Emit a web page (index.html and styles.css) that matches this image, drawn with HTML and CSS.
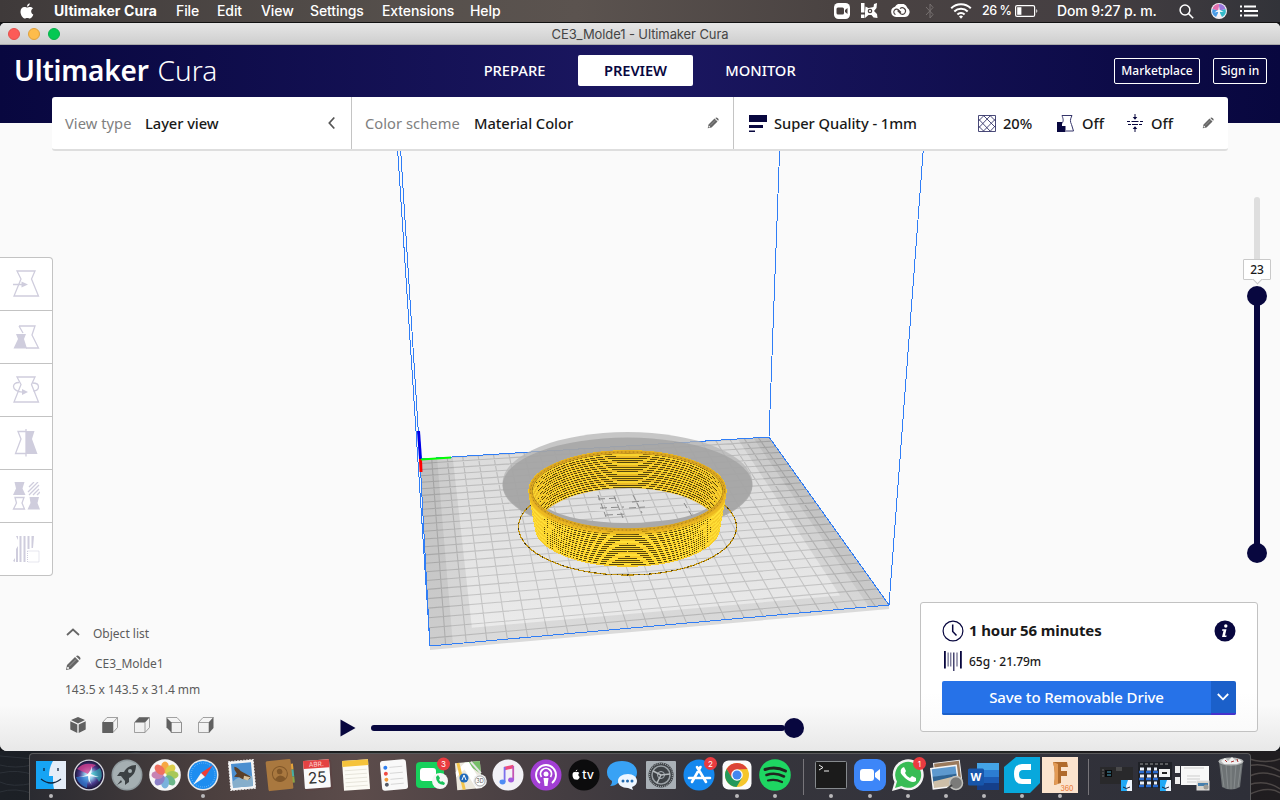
FILE: index.html
```html
<!DOCTYPE html>
<html lang="es">
<head>
<meta charset="utf-8">
<title>CE3_Molde1 - Ultimaker Cura</title>
<link rel="stylesheet" href="styles.css">
</head>
<body>
<nav class="menubar">
  <svg class="apple" width="14" height="16" viewBox="0 0 14 16" fill="#fff"><path d="M9.7 0.3C8.1.6 6.900 2 7 3.700 8.700 3.600 9.900 2 9.700.3zM7.200 4.600C6.600 4.600 5.600 3.900 4.500 3.900 2.300 4 .5 5.700.5 8.800c0 3 2.200 6.700 4.100 6.700.9 0 1.500-.6 2.700-.6s1.700.6 2.600.6c1.600 0 3-2.700 3.400-4-2.800-1.400-2.700-5-.3-6.100C12.200 4.300 11 3.900 10 3.900c-1.200 0-2.100.7-2.800.7z"/></svg>
  <b>Ultimaker Cura</b><span>File</span><span>Edit</span><span>View</span><span>Settings</span><span>Extensions</span><span>Help</span>
  <svg width="16" height="16" viewBox="0 0 16 16"><rect width="16" height="16" rx="4.500" fill="#fff"/><rect x="2.500" y="4.500" width="7.500" height="7" rx="1.500" fill="#4a4241"/><path d="M11 7l2.500-2v6L11 9z" fill="#4a4241"/></svg>
  <svg width="18" height="16" viewBox="0 0 18 16" fill="#fff"><path d="M1 0h3.500v9.500H1zM1 11.500h3.500v3.500H1zM5.500 3.500L8.500 5l5-1 .5-3 3-1-.5 5-2.500 3 3 3 .5 4-4-.5-2-2.500h-3L5 15V9z"/><circle cx="10" cy="8" r="2.300" fill="#4a4241"/><circle cx="10" cy="8" r="1.100" fill="#fff"/></svg>
  <svg width="20" height="14" viewBox="0 0 20 14"><path d="M6 13a5.200 5.200 0 0 1-1-10.200A7 7 0 0 1 17.500 4 5 5 0 0 1 14 13z" fill="#fff"/><path d="M11 8.500L9 6.500a2.800 2.800 0 1 0-3.500 4M7.500 6.500l3.500 3.600a3.300 3.300 0 1 0-1-5.500" fill="none" stroke="#4a4241" stroke-width="1.100"/></svg>
  <svg width="10" height="16" viewBox="0 0 10 16"><path d="M1 4l7 7.500L5 15V1l3 3.500L1 12" fill="none" stroke="#777170" stroke-width="1"/></svg>
  <svg width="22" height="16" viewBox="0 0 22 16" fill="none" stroke="#fff" stroke-width="2"><path d="M1.200 5.200a14 14 0 0 1 19.600 0M4.300 8.500a9.500 9.500 0 0 1 13.400 0M7.400 11.500a5 5 0 0 1 7.200 0"/><path d="M11 15.800l-2-2.300a3 3 0 0 1 4 0z" fill="#fff" stroke="none"/></svg>
  <span class="small">26 %</span>
  <svg width="24" height="12" viewBox="0 0 24 12"><rect x=".6" y=".6" width="19" height="10.800" rx="1.500" fill="none" stroke="#fff" stroke-width="1.200"/><rect x="2.200" y="2.200" width="4.200" height="7.600" fill="#fff"/><path d="M21.300 4q2 2 0 4z" fill="#fff"/></svg>
  <span class="clock">Dom 9:27 p. m.</span>
  <svg width="15" height="15" viewBox="0 0 15 15" fill="none" stroke="#fff" stroke-width="1.500"><circle cx="6" cy="6" r="4.900"/><path d="M9.600 9.600l4.600 4.600"/></svg>
  <svg width="16" height="16" viewBox="0 0 16 16"><circle cx="8" cy="8" r="8" fill="#f1eef4"/><path d="M8 8L1.500 6A7 7 0 0 1 8 1z" fill="#e26fae"/><path d="M8 8V1a7 7 0 0 1 6.500 5z" fill="#9a78de"/><path d="M8 8L1.500 6A7 7 0 0 0 5 14z" fill="#4a9be6"/><path d="M8 8l6.500-2a7 7 0 0 1-3.500 8z" fill="#34b9c8"/><path d="M8 3l.7 4 4 2-4-.2L8 15l-.7-6.200-4 .7 4-2.500z" fill="#fff"/></svg>
  <svg width="18" height="12" viewBox="0 0 18 12" stroke="#fff" stroke-width="2"><path d="M0 1.500h2M4 1.500h12M0 6h2M4 6h14M0 10.500h2M4 10.500h14"/></svg>
</nav>

<section class="window">
  <header class="titlebar">
    <div class="lights"><i></i><i></i><i></i></div>
    <div class="title">CE3_Molde1 - Ultimaker Cura</div>
  </header>
  <main class="workspace">
    <svg class="scene" id="scene" width="1280" height="706" viewBox="0 45 1280 706"></svg>
    <div class="appheader">
      <div class="logo"><b>Ultimaker</b><span>Cura</span></div>
      <div class="tabs"><span>PREPARE</span><span class="active">PREVIEW</span><span>MONITOR</span></div>
      <div class="account"><span class="market">Marketplace</span><span class="signin">Sign in</span></div>
    </div>
    <div class="stagebar">
      <div class="seg seg-view"><span class="label">View type</span><span class="value">Layer view</span>
        <svg width="9" height="14" viewBox="0 0 9 14" fill="none" stroke="#555" stroke-width="1.700"><path d="M7.300 1.500L2.300 7l5 5.500"/></svg></div>
      <div class="seg seg-color"><span class="label">Color scheme</span><span class="value">Material Color</span>
        <svg width="12" height="12" viewBox="0 0 16 16"><use href="#pencil"/></svg></div>
      <div class="seg seg-print">
        <svg width="18" height="17" viewBox="0 0 18 17" fill="#08073f"><path d="M0 0h18v7H0zM0 10h14v3H0zM0 15.500h6v1.500H0z"/></svg>
        <span class="value">Super Quality - 1mm</span>
        <svg width="18" height="17" viewBox="0 0 18 17" fill="none" stroke="#35356a" stroke-width=".9"><path d="M.5.500h17v16H.5zM.5 6L6 .5M.5 13L12.500.5M5 16.500L17.500 4M12 16.500l5.500-6M.5 11l5.500 5.500M.5 4l12 12.500M5.500.5l12 12M12 .5l5.500 5.500"/></svg>
        <span class="value">20%</span>
        <svg width="18" height="17" viewBox="0 0 18 17"><path d="M5 .5h10c-2 4-2 6-.5 9l2 6.500H9M5 .5c1 3 2 5 0 8" fill="none" stroke="#35356a"/><path d="M0 7h5v4h3.500v6H0z" fill="#08073f"/></svg>
        <span class="value">Off</span>
        <svg width="16" height="18" viewBox="0 0 16 18"><path d="M0 7.500h3M4.500 7.500h7M13 7.500h3M1 10.500h3M5 10.500h6M12 10.500h3M8 0v4M8 14v4" stroke="#08073f" fill="none"/><path d="M5.700 3h4.600L8 5.800zM5.700 15h4.600L8 12.200z" fill="#08073f"/></svg>
        <span class="value">Off</span>
        <svg width="12" height="12" viewBox="0 0 16 16"><use href="#pencil"/></svg>
      </div>
    </div>

    <div class="middle">
      <div class="tools">
        <div><svg viewBox="0 0 28 28"><path d="M5 1h18l-3.500 8L26.500 26H2L9 9z" class="ol"/><path d="M1 14.500h9" class="ol"/><path d="M9.500 11.500l6.500 3-6.500 3z" class="fl"/></svg></div>
        <div><svg viewBox="0 0 28 28"><path d="M7 3h16l-3 9 6.500 13H14M7 3l4 7" class="ol"/><path d="M4 11h10l-2 5 3 9.500H1.500L6 16z" class="fl"/></svg></div>
        <div><svg viewBox="0 0 28 28"><path d="M5 1h18l-3.500 7.500L26.500 26H2L9 8.500z" class="ol"/><path d="M7 6.500c-4 0-5.500 2-5.500 4 0 3 4 5.300 9 5.700M20.500 7c4 0 6 1.500 6 3.700s-2 4-5 4.300" class="ol"/><path d="M10 13l6 3-6 3z" class="fl"/></svg></div>
        <div><svg viewBox="0 0 28 28"><path d="M14 2.500H6l3 7.500L3.500 24.500H14" class="ol"/><path d="M14 2h8.500L20 10l5.500 15H14z" class="fl"/><path d="M14 0v27.500" class="ol"/></svg></div>
        <div><svg viewBox="0 0 28 28"><path d="M2.500 0h10l-2 6.500 3 6.500H1l3-6.500zM17.500 15h9.500l-1.500 6 2.500 6.500H15.500l3-6.500z" class="fl"/><path d="M3 15.500h9L10 21l2.500 6h-11L4.500 21z" class="ol"/><path d="M17 5l5-5M16 10L26 0M17 13l10-10M21 13l6-6M25 13l3-3" class="ol"/></svg></div>
        <div><svg viewBox="0 0 28 28"><path d="M4 1l2 4V1zM7.500 1h2v26h-2zM11.500 1h2v26h-2zM15.500 1h2v13h-2zM19.500 1H22l-1 12h-1.500zM4 14l2-3v16H4zM1 26l2-3v4z" class="fl"/><rect x="15.500" y="16" width="11.500" height="11" class="dot"/></svg></div>
      </div>
      <div class="layerslider">
        <div class="rest"></div>
        <div class="bubble">23</div>
        <div class="knob top"></div>
        <div class="range"></div>
        <div class="knob"></div>
      </div>
    </div>

    <div class="bottom">
      <div class="objectinfo">
        <div class="row list"><svg width="14" height="8" viewBox="0 0 14 8" fill="none" stroke="#666" stroke-width="1.800"><path d="M1 7l6-5.500L13 7"/></svg><span>Object list</span></div>
        <div class="row name"><svg width="16" height="16" viewBox="0 0 16 16"><use href="#pencil"/></svg><span>CE3_Molde1</span></div>
        <div class="dims">143.5 x 143.5 x 31.4 mm</div>
        <div class="cubes">
          <svg viewBox="0 0 16 16"><path d="M8 0l7 3-7 3.500L1 3zM.3 4.200l7 3.300V16l-7-3.500zM15.700 4.200l-7 3.300V16l7-3.500z" fill="#606060"/></svg>
          <svg viewBox="0 0 16 16"><path d="M.5 5.500l4.500-5h10.500v10l-4.500 5H.5zM11 5.500L15.500.5M11 5.500v10" class="cl"/><path d="M.5 5H11v11H.5z" fill="#606060"/></svg>
          <svg viewBox="0 0 16 16"><path d="M.5 5.500l4.500-5h10.500v10l-4.500 5H.5zM11 5.500v10" class="cl"/><path d="M.5 5.500L5 .5h10.500l-4.500 5z" fill="#606060"/></svg>
          <svg viewBox="0 0 16 16"><path d="M.5.500H11l4.500 5v10H5M5 5.500h10.500v10H5z" class="cl"/><path d="M.5.500l5 5v10l-5-5z" fill="#606060"/></svg>
          <svg viewBox="0 0 16 16"><path d="M.5 5.500l4.500-5h10.500M.5 5.500H11v10H.5z" class="cl"/><path d="M11 5l4.500-5v11L11 16z" fill="#606060"/></svg>
        </div>
      </div>
      <div class="player"><svg width="16" height="18" viewBox="0 0 16 18"><path d="M.5.500L15.500 9 .5 17.500z" fill="#08073f"/></svg><div class="track"></div><div class="knob"></div></div>
      <div class="card">
        <div class="time"><svg width="22" height="22" viewBox="0 0 22 22" fill="none" stroke="#08073f" stroke-width="1.200"><circle cx="11" cy="11" r="9.900"/><path d="M10.700 4.500v7l3.800 4" stroke-width="1.500"/></svg><b>1 hour 56 minutes</b>
          <svg width="22" height="22" viewBox="0 0 22 22"><circle cx="11" cy="11" r="10.500" fill="#08073f"/><circle cx="11.800" cy="6" r="1.700" fill="#fff"/><path d="M8.300 9.200h4.200l-1.500 6.300h1.600l-.3 1.500H8l1.500-6.300H8z" fill="#fff"/></svg></div>
        <div class="usage"><svg width="18" height="20" viewBox="0 0 18 20" fill="#08073f"><path d="M0 0h1.800v17.500H0zM16 0h1.800v17.500H16z"/><path d="M3.600 1.500h1v14h-1zM6.300 1.500h1v14h-1zM9 1.500h1.500V20H9zM12.500 1.500h1v14h-1z" opacity=".75"/></svg><span>65g · 21.79m</span></div>
        <div class="save"><span>Save to Removable Drive</span><i><svg width="12" height="8" viewBox="0 0 12 8" fill="none" stroke="#fff" stroke-width="1.800"><path d="M.8 1L6 6.300 11.200 1"/></svg></i></div>
      </div>
    </div>
  </main>
</section>

<footer class="desktop">
  <svg class="wall" width="1280" height="49" viewBox="0 0 1280 49"><path d="M0 5q60 8 140-4M0 14q15 4 32 0M0 22q18-4 34 2M0 31q12 6 34 1M0 41q15-5 34 2" stroke="#2c3138" fill="none"/><path d="M1244 6q20 8 36 2M1246 16q14-6 34 4M1248 26q14-8 32 0M1248 34q18-6 32 4M1248 44q20-10 32-2" stroke="#4c4746" stroke-width="1.500" fill="none"/><path d="M230 1h60M350 1h110M560 1h130M760 1h120M960 1h90" stroke="#2b322e"/></svg>
  <div class="dock">
    <div class="app on"><svg viewBox="0 0 32 32"><rect x="1" y="2" width="30" height="28" fill="#e4edf8"/><path d="M1 2h17c-3 5-4 10-4 15h4c0 5 0 9 1 13H1z" fill="#16a4f4"/><path d="M9 9v3M23 9v3M6 20q10 8 20 0" stroke="#10243c" stroke-width="1.300" fill="none"/></svg></div>
    <div class="app"><svg viewBox="0 0 32 32"><defs><radialGradient id="siri"><stop offset="0" stop-color="#fff"/><stop offset=".3" stop-color="#8fc8ea"/><stop offset=".65" stop-color="#4a3a8c"/><stop offset="1" stop-color="#1a1538"/></radialGradient></defs><circle cx="16" cy="16" r="15.500" fill="#d8d8e0"/><circle cx="16" cy="16" r="14.200" fill="url(#siri)"/><path d="M15 15L4 10q7-8 19-4-5 3-8 9z" fill="#dd3f8e" opacity=".75"/><path d="M16 17L3 18q3 8 11 11 0-6 2-12z" fill="#2b83d8" opacity=".65"/><path d="M17 15l10-6q4 8-1 14-2-5-9-8z" fill="#30c0bd" opacity=".6"/><path d="M5 18q8-1 10-3 3-3 4-8 0 5-1 8 4 2 8 3-5 0-9-1-1 5 2 9-4-4-4-9-5 1-10 1z" fill="#fff" opacity=".85"/></svg></div>
    <div class="app"><svg viewBox="0 0 32 32"><circle cx="16" cy="16" r="15.500" fill="#8f999d"/><circle cx="16" cy="16" r="14" fill="#a5afb2"/><path d="M25 6c-6 0-10 3-12 7l-4 0-3 4 4 0 4 5 0 4 4-3 0-4c4-2 7-6 7-13zM10 21l-4 5 5-3z" fill="#3c4144"/><circle cx="19" cy="12" r="2" fill="#a5afb2"/></svg></div>
    <div class="app"><svg viewBox="0 0 32 32"><circle cx="16" cy="16" r="15.800" fill="#f6f6f6"/><g opacity=".85"><ellipse cx="16" cy="8.500" rx="4" ry="6" fill="#f79a24"/><ellipse cx="16" cy="8.500" rx="4" ry="6" fill="#d7c92f" transform="rotate(45 16 16)"/><ellipse cx="16" cy="8.500" rx="4" ry="6" fill="#9bc13c" transform="rotate(90 16 16)"/><ellipse cx="16" cy="8.500" rx="4" ry="6" fill="#55ac78" transform="rotate(135 16 16)"/><ellipse cx="16" cy="8.500" rx="4" ry="6" fill="#65a7d8" transform="rotate(180 16 16)"/><ellipse cx="16" cy="8.500" rx="4" ry="6" fill="#7b6dc0" transform="rotate(225 16 16)"/><ellipse cx="16" cy="8.500" rx="4" ry="6" fill="#bf70a8" transform="rotate(270 16 16)"/><ellipse cx="16" cy="8.500" rx="4" ry="6" fill="#ee5948" transform="rotate(315 16 16)"/></g></svg></div>
    <div class="app on"><svg viewBox="0 0 32 32"><circle cx="16" cy="16" r="15.500" fill="#e9e9e9"/><circle cx="16" cy="16" r="14" fill="#1d8df0"/><circle cx="16" cy="16" r="12" fill="none" stroke="#9fd4ff" stroke-dasharray=".6 1.500"/><path d="M26 6L18 18l-4-4z" fill="#ef3d35"/><path d="M6 26l8-12 4 4z" fill="#f4f4f4"/></svg></div>
    <div class="app"><svg viewBox="0 0 32 32"><g transform="rotate(-5 16 16)"><rect x="3.500" y="1.500" width="25" height="29" fill="#f4f4f4" stroke="#f4f4f4" stroke-dasharray="1.500 1.500"/><rect x="6" y="4" width="20" height="24" fill="#4b8fd0"/><path d="M6 22q10-8 20-4v10H6z" fill="#86aecb"/><path d="M9 7q4 1 6 5l3 2 6 4q1 3-3 3l-5-1-3-2-5-1 3-3-2-4z" fill="#5b4029"/><path d="M18 17l6 2-3 3-4-2z" fill="#d9c39d"/></g></svg></div>
    <div class="app"><svg viewBox="0 0 32 32"><g transform="rotate(-6 16 16)"><path d="M27 6h3v6h-3z" fill="#e7a53a"/><path d="M27 12h3v7h-3z" fill="#46b0a5"/><path d="M27 19h3v6h-3z" fill="#8aa646"/><rect x="3" y="1" width="25" height="30" rx="1.500" fill="#a9783f"/><circle cx="16" cy="15" r="7.500" fill="none" stroke="#815729"/><circle cx="16" cy="12.500" r="2.800" fill="#815729"/><path d="M10.500 20q5.500-7 11 0-5.500 5-11 0z" fill="#815729"/></g></svg></div>
    <div class="app"><svg viewBox="0 0 32 32"><g transform="rotate(-4 16 16)"><rect x="3" y="2" width="27" height="29" rx="1" fill="#5b4444"/><rect x="2" y="1" width="26" height="28" rx="1" fill="#fafafa"/><path d="M2 1h26v8H2z" fill="#e44242"/><text x="15" y="7.500" text-anchor="middle" font-size="6.500" fill="#ffd7d7">ABR.</text><text x="15" y="24" text-anchor="middle" font-size="15.500" fill="#333">25</text></g></svg></div>
    <div class="app"><svg viewBox="0 0 32 32"><g transform="rotate(-4 16 16)"><rect x="3" y="1" width="26" height="30" fill="#fcfbf5"/><path d="M3 1h26v6H3z" fill="#f5c33b"/><path d="M5 11h22M5 15h22M5 19h22M5 23h22M5 27h22" stroke="#dedbd0" stroke-width=".7"/></g></svg></div>
    <div class="app"><svg viewBox="0 0 32 32"><g transform="rotate(-5 16 16)"><rect x="3" y="1" width="26" height="30" rx="3" fill="#f9f9f9"/><path d="M12 8h13M12 14h13M12 20h13M12 25h13" stroke="#c9c9c9" stroke-width=".7"/><circle cx="8" cy="8" r="2" fill="#2d7ef0"/><circle cx="8" cy="14" r="2" fill="#f04b43"/><circle cx="8" cy="20" r="2" fill="#f29a38"/><circle cx="8" cy="25" r="2" fill="#555b68"/></g></svg></div>
    <div class="app"><svg viewBox="0 0 32 32"><rect x="0" y="3" width="28" height="26" rx="4" fill="#17d15c"/><rect x="4" y="9" width="16" height="13" rx="3" fill="#fff"/><circle cx="24" cy="22" r="8" fill="#f6f6f6"/><path d="M20 18q0 7 8 8l1-2-3-2-1 1-2-2 1-2-2-3z" fill="#17c25a"/><circle cx="27.500" cy="5" r="6.500" fill="#ea3b40"/><text x="27.500" y="8" text-anchor="middle" font-size="8" fill="#fff">3</text></svg></div>
    <div class="app"><svg viewBox="0 0 32 32"><g transform="rotate(-5 16 16)"><rect x="2" y="3" width="25" height="27" fill="#ece8dd"/><path d="M12 3h15v13z" fill="#76be68"/><path d="M2 12L12 3h4l10 20v7h-5L11 10l-9 7z" fill="#fff"/><path d="M5 3l4 27" stroke="#f2c44b" stroke-width="3"/><path d="M18 3l9 12" stroke="#e5e5e5" stroke-width="2"/></g><circle cx="10" cy="19" r="4.500" fill="#226bbb"/><path d="M8 21l2-5 2 5" fill="none" stroke="#fff"/><circle cx="26" cy="22" r="6.800" fill="#eee"/><circle cx="26" cy="22" r="5" fill="#fff" stroke="#999" stroke-width=".8"/><text x="26" y="24" text-anchor="middle" font-size="5.500" fill="#555">3D</text></svg></div>
    <div class="app"><svg viewBox="0 0 32 32"><circle cx="16" cy="16" r="15.500" fill="#f2f1f6"/><path d="M12.500 9.500l9-2" stroke="#ee4c7d" stroke-width="3.500"/><path d="M21.200 7v14" stroke="#c454b4" stroke-width="1.800"/><path d="M12.600 8v15" stroke="#7b70ec" stroke-width="1.800"/><ellipse cx="10.500" cy="23" rx="3" ry="2.400" fill="#4f8df5"/><ellipse cx="19" cy="21" rx="3" ry="2.400" fill="#a35bdd"/></svg></div>
    <div class="app"><svg viewBox="0 0 32 32"><circle cx="16" cy="16" r="15.500" fill="#a23fd4"/><g fill="none" stroke="#fff" stroke-width="1.800"><path d="M10 24a10 10 0 1 1 12 0M11.500 18a5.500 5.500 0 1 1 9 0"/></g><circle cx="16" cy="15" r="2.500" fill="#fff"/><path d="M13.500 19h5l-1 8h-3z" fill="#fff"/></svg></div>
    <div class="app"><svg viewBox="0 0 32 32"><circle cx="16" cy="16" r="15.500" fill="#0c0c0d"/><path d="M9.500 10.500q-.5 2-2 2 .2-1.600 2-2zM4.500 16c0-4 3-3 3.600-2.700.7-.3 2.400-.5 3.200.8-1.600 1.200-1.200 3 .4 3.900-1 3-2.300 2.800-3.500 2.400-2 .8-3.700-1.500-3.700-4.400z" fill="#fff"/><text x="20" y="19.800" text-anchor="middle" font-size="12.500" font-weight="500" fill="#fff">tv</text></svg></div>
    <div class="app"><svg viewBox="0 0 32 32"><path d="M16 2C6 2 1 7 1 13.500c0 4 2 6.500 5 8.500 0 3-1 4-2 5 4 0 6-1 8-3C24 25 31 21 31 13.500 31 7 25 2 16 2z" fill="#38a2f5"/><path d="M22 15c-6 0-10 3-10 7s4 7 10 7l5 2-1-3c3-1 5-3 5-6 0-4-4-7-9-7z" fill="#eef6ff"/><circle cx="17" cy="22" r="1.500" fill="#236bb0"/><circle cx="21.500" cy="22" r="1.500" fill="#236bb0"/><circle cx="26" cy="22" r="1.500" fill="#236bb0"/></svg></div>
    <div class="app"><svg viewBox="0 0 32 32"><rect x="1" y="2" width="30" height="28" rx="1" fill="#a9b0b6"/><circle cx="16" cy="16" r="12.500" fill="#3d4145"/><circle cx="16" cy="16" r="9" fill="none" stroke="#9aa0a5" stroke-width="1.500"/><circle cx="16" cy="16" r="11.500" fill="none" stroke="#9aa0a5" stroke-width="1.200" stroke-dasharray="1 1"/><circle cx="16" cy="16" r="3.500" fill="#3d4145" stroke="#a9b0b6"/><path d="M16 16L8 12M16 16l9-1M16 16l-4 8" stroke="#b5babd" stroke-width="1.500"/></svg></div>
    <div class="app"><svg viewBox="0 0 32 32"><circle cx="16" cy="16" r="15.500" fill="#1588ee"/><path d="M17.500 8L9 23M14 8l9 15M6 19h13M23 19h4" stroke="#fff" stroke-width="2.600" stroke-linecap="round"/><circle cx="27.500" cy="4.500" r="6.500" fill="#ea3b40"/><text x="27.500" y="7.500" text-anchor="middle" font-size="8" fill="#fff">2</text></svg></div>
    <div class="app on"><svg viewBox="0 0 32 32"><rect x="1.500" y="1.500" width="29" height="29" rx="6" fill="#fbfbfb"/><circle cx="16" cy="16" r="12" fill="#f5c62c"/><path d="M5.600 10A12 12 0 0 1 26.400 10L16 10.500l-5.200 8.500z" fill="#dc4437"/><path d="M5.600 10A12 12 0 0 0 15.500 28l5.500-9-10 0z" fill="#24985a"/><circle cx="16" cy="16" r="5.800" fill="#fff"/><circle cx="16" cy="16" r="4.500" fill="#4386ef"/></svg></div>
    <div class="app on"><svg viewBox="0 0 32 32"><circle cx="16" cy="16" r="15.800" fill="#1ed662"/><g fill="none" stroke="#20251f" stroke-linecap="round"><path d="M6 10.500q11-3.500 20.500 1.500" stroke-width="3"/><path d="M7.500 16q9-3 17.500 1.500" stroke-width="2.600"/><path d="M9 21.500q7-2 14 1.500" stroke-width="2.200"/></g></svg></div>
    <div class="sep"></div>
    <div class="app on"><svg viewBox="0 0 32 32"><rect x=".5" y="2.500" width="31" height="27" rx="1" fill="#1b1b1b" stroke="#868a8e"/><path d="M4 6l4 2.500-4 2.500M9 12h5" stroke="#eee" fill="none"/></svg></div>
    <div class="app on"><svg viewBox="0 0 32 32"><rect x="0" y="0" width="32" height="32" rx="9" fill="#3d86f8"/><rect x="6" y="10" width="14" height="12" rx="3" fill="#fff"/><path d="M21 14l5-4v12l-5-4z" fill="#fff"/></svg></div>
    <div class="app on"><svg viewBox="0 0 32 32"><path d="M0 32l2.500-9A15.500 15.500 0 1 1 9 29.500z" fill="#f4f4f4"/><path d="M3 29l2-6.500A13 13 0 1 1 9.500 27z" fill="#38bc55"/><path d="M10 9q-4 4 3 10t11 3l0-3-4-2-2 2q-4-2-5-5l1-2-2-4z" fill="#fff"/><circle cx="27.500" cy="4.500" r="6.500" fill="#ea3b40"/><text x="27.500" y="7.500" text-anchor="middle" font-size="8" fill="#fff">1</text></svg></div>
    <div class="app on"><svg viewBox="0 0 32 32"><g transform="rotate(-7 16 16)"><rect x="5" y="3" width="26" height="20" fill="#9a7a5c" stroke="#eee"/><rect x="1" y="7" width="27" height="22" fill="#f5f5f5"/><rect x="2.500" y="8.500" width="24" height="8" fill="#5d99ce"/><path d="M2.500 16h24v4l-24 3z" fill="#2e6494"/><path d="M2.500 21l24-3v9.500h-24z" fill="#cdbfa8"/></g><circle cx="26" cy="24" r="6.500" fill="#7b7b79" stroke="#c2c2bd" stroke-width="1.500"/><path d="M17 30l5-4" stroke="#444" stroke-width="2"/></svg></div>
    <div class="app on"><svg viewBox="0 0 32 32"><path d="M9 4h22v8H9z" fill="#44a4e6"/><path d="M9 11h22v7H9z" fill="#2c7dd2"/><path d="M9 18h22v7H9z" fill="#1c5bb4"/><path d="M9 24h22v7H9z" fill="#153f8a"/><rect x="0" y="9.500" width="16" height="17" rx="1.500" fill="#1756ab"/><text x="8" y="22" text-anchor="middle" font-size="11" font-weight="700" fill="#fff">W</text></svg></div>
    <div class="app on"><svg class="big" viewBox="0 0 36 36"><path d="M12 0h24v26L26 36H0V10z" fill="#08a8dc"/><path d="M27 7v6h-8q-4 0-4 4.500T19 22h8v5h-9q-8 0-8-10T18 7z" fill="#fff"/></svg></div>
    <div class="app on"><svg class="big" viewBox="0 0 36 36"><rect width="36" height="36" fill="#fbe3cd"/><path d="M11 5h14l1 5h-7v4h6v5h-6v7l-7 2q2-12-1-23z" fill="#b06a2c"/><path d="M11 5l5 2v20l-4 1q2-12-1-23z" fill="#e39a55"/><text x="25" y="33.500" text-anchor="middle" font-size="7" fill="#e8712d">360</text></svg></div>
    <div class="sep"></div>
    <div class="app"><svg viewBox="0 0 36 32"><rect x="1" y="8" width="33" height="17" fill="#29292b"/><path d="M3 11h2M3 14h2M3 17h2M17 9h6M17 11h6" stroke="#6a6a6a"/><rect x="6" y="11" width="7" height="7" fill="#0a0a0a"/><path d="M8 13h4M8 16h4" stroke="#4aa2c0"/><g id="mini-finder"><rect x="22" y="21" width="11" height="11" fill="#eef4fc"/><path d="M22 21h7l-2 6 1 5h-6z" fill="#1fa9f6"/><path d="M24 28q3 3 7 0" fill="none" stroke="#223"/></g></svg></div>
    <div class="app"><svg viewBox="0 0 36 32"><rect x="1" y="3" width="34" height="26" fill="#1f2127"/><path d="M3 5h30" stroke="#999" stroke-dasharray="3 2"/><path d="M2 13h19M2 20h19M2 27h19" stroke="#2769cf" stroke-width="2.500" stroke-dasharray="5 2"/><path d="M3 10h17M3 17h17M3 24h17" stroke="#e7edf7" stroke-width="3" stroke-dasharray="4 3"/><rect x="22" y="10" width="11" height="8" fill="#f2f2f2"/><path d="M25 14h5" stroke="#222" stroke-width="2"/><use href="#mini-finder" x="1"/></svg></div>
    <div class="app"><svg viewBox="0 0 36 32"><path d="M0 7h5v7H0zM0 18h5v7H0z" fill="#eee"/><rect x="6" y="7" width="28" height="19" fill="#f8f8f8"/><path d="M9 9h20M12 17h13M12 20h13M12 23h9" stroke="#bbb" stroke-width=".7"/><rect x="22" y="22" width="12" height="9" fill="#d7d3ca" stroke="#ddd"/><path d="M23 24h10v3H23z" fill="#467fac"/><circle cx="31" cy="28" r="2.500" fill="#9b9b96"/></svg></div>
    <div class="app"><svg class="trash" viewBox="0 0 28 36"><path d="M2 5h24l-3 26q-9 5-18 0z" fill="#6e7375"/><path d="M4 9l3 22M9 9l2 24M14 9v24M19 9l-2 24M24 9l-3 22" stroke="#8d9293" stroke-width=".8"/><ellipse cx="14" cy="5.500" rx="12.500" ry="4" fill="#b6b8b8"/><path d="M4 5l4-3 3 3 4-4 4 4 3-2 3 3-5 2H7z" fill="#f0f0f0"/><path d="M8 4l2 2M14 6l3-1M20 3l1 3" stroke="#a33" /></svg></div>
  </div>
</footer>

<svg width="0" height="0" class="defs"><defs><g id="pencil"><path d="M1 15l1-5 8-8 4 4-8 8zM11 1.200q1.500-1.400 3 0l.8.8q1.400 1.500 0 3z" fill="#666"/><path d="M4 11.500l7-7" stroke="#aaa" stroke-width=".8"/><circle cx="3" cy="13" r="1" fill="#fff"/></g></defs></svg>
<script src="scene.js"></script>
</body>
</html>
```

FILE: styles.css
```css
* { box-sizing: border-box; }
body { margin: 0; width: 1280px; height: 800px; overflow: hidden; display: flex; flex-direction: column; background: #15171b; font-family: "Noto Sans", "Open Sans", sans-serif; color: #191919; }
svg { display: block; flex: none; }
i { font-style: normal; }
.defs { position: absolute; }

.menubar { height: 23px; flex: none; padding-left: 20px; display: grid; grid-template-columns: 34px 122px 41px 44px 49px 72px 88px 364px 26px 30px 35px 25px 32px 33px 42px 122px 32px 29px 30px; align-items: center; background: linear-gradient(90deg, #3f3a3a, #56504c 32%, #5b534f 45%, #4a4342 65%, #453f42 85%, #323339); color: #fff; font: 500 14px/22px Inter, sans-serif; letter-spacing: -0.1px; white-space: nowrap; border-bottom: 1px solid #111; }
.menubar b { font-weight: 700; letter-spacing: 0.08px; }
.menubar .small { font-size: 12.500px; letter-spacing: -0.5px; }
.menubar .clock { letter-spacing: -0.12px; }

.window { height: 728px; flex: none; border-radius: 5px 5px 7px 7px; overflow: hidden; background: #fafafa; }
.titlebar { height: 22px; display: grid; grid-template-columns: 200px 1fr 200px; align-items: center; background: linear-gradient(#e6e6e6, #cecece); border-bottom: 1px solid #a9a9a9; }
.lights { display: flex; gap: 8px; padding-left: 8px; }
.lights i { width: 12px; height: 12px; border-radius: 50%; background: #fc5b57; border: 1px solid #e3504c; }
.lights i:nth-child(2) { background: #fdbc4b; border-color: #dfa03c; }
.lights i:nth-child(3) { background: #04c853; border-color: #08b14b; }
.title { text-align: center; font: 13px/20px Inter, sans-serif; color: #454545; letter-spacing: -0.1px; }

.workspace { position: relative; height: 706px; display: flex; flex-direction: column; background: linear-gradient(#fafafa 660px, #e8e8e8 706px); }
.scene { position: absolute; left: 0; top: 0; }
.appheader { position: relative; height: 78px; flex: none; display: grid; grid-template-columns: 451px 1fr 166px; align-items: start; background: linear-gradient(90deg, #08073f, #1b1761 50%, #08073f); color: #fff; padding-top: 10px; }
.logo { display: flex; gap: 9px; padding-left: 14px; font-size: 28px; line-height: 32px; margin-top: -1px; }
.logo b { font-weight: 600; letter-spacing: -0.2px; }
.logo span { font-weight: 300; }
.tabs { display: flex; gap: 6px; }
.tabs span { height: 31px; width: 115px; text-align: center; font-size: 14.700px; line-height: 31px; font-weight: 500; border-radius: 2px; }
.tabs span:first-child { margin-left: 6px; }
.tabs span:nth-child(3) { margin-left: 4px; }
.tabs .active { background: #fff; color: #08073f; font-weight: 600; letter-spacing: -0.1px; }
.account { display: flex; gap: 13px; padding-top: 3px; }
.account span { height: 26px; border: 1px solid #fff; border-radius: 2px; font-size: 12px; line-height: 24px; font-weight: 500; text-align: center; }
.market { width: 86px; }
.signin { width: 54px; }

.stagebar { position: relative; flex: none; height: 54px; width: 1176px; margin: -26px 0 0 52px; display: grid; grid-template-columns: 299px 382px 1fr; background: #fff; border-bottom: 2px solid #dedede; border-radius: 3px; font-size: 14.700px; }
.seg { display: flex; align-items: center; white-space: nowrap; padding-left: 13px; }
.seg + .seg { border-left: 1px solid #c4c4c4; }
.label { color: #808080; letter-spacing: 0.05px; }
.value { font-weight: 500; letter-spacing: -0.05px; }
.seg-view .label { width: 80px; }
.seg-view .value { width: 182px; }
.seg-color .label { width: 109px; }
.seg-color .value { width: 233px; }
.seg-print { display: grid; grid-template-columns: 25px 204px 25px 54px 25px 45px 24px 51px 12px; padding-left: 15px; }

.middle { position: relative; height: 449px; flex: none; display: flex; justify-content: space-between; align-items: flex-start; }
.tools { margin-top: 106px; width: 53px; border: 1px solid #c3c3c3; border-left: 0; border-radius: 0 4px 4px 0; background: #fff; overflow: hidden; }
.tools div { height: 53px; padding: 12px 0 0 12px; border-bottom: 1px solid #c3c3c3; }
.tools div:last-child { height: 52px; border-bottom: 0; }
.tools svg { width: 28px; height: 28px; }
.ol { fill: none; stroke: #cfcddd; stroke-width: 1.300; }
.fl { fill: #cfcddd; }
.dot { fill: none; stroke: #cfcddd; stroke-dasharray: 1 1; }
.layerslider { margin: 46px 9px 0 0; width: 28px; display: flex; flex-direction: column; align-items: center; }
.rest { width: 6px; height: 62px; background: #dedede; border-radius: 3px 3px 0 0; }
.bubble { width: 28px; height: 21px; border: 1px solid #c9c9c9; background: #fff; font-size: 12px; line-height: 19px; font-weight: 500; text-align: center; border-radius: 1px; }
.bubble::after { content: ""; display: block; width: 6px; height: 6px; margin: -3px auto 0; background: #fff; border: solid #c9c9c9; border-width: 0 1px 1px 0; transform: rotate(45deg); }
.knob { width: 20px; height: 20px; border-radius: 50%; background: #08073f; flex: none; }
.knob.top { margin-top: 6px; }
.range { width: 6px; height: 241px; margin: -2px 0; background: #08073f; }

.bottom { position: relative; flex: 1; display: flex; align-items: flex-start; font-size: 12px; color: #5c5c5c; }
.objectinfo { width: 340px; padding: 23px 0 0 65px; }
.row { display: flex; align-items: center; height: 20px; }
.list { gap: 12px; padding-left: 1px; }
.list svg { margin-top: -3px; }
.list span { padding-left: 1px; }
.name { gap: 14px; margin-top: 10px; }
.dims { line-height: 20px; margin-top: 7px; letter-spacing: -0.03px; }
.cubes { display: flex; gap: 16px; margin: 17px 0 0 5px; }
.cubes svg { width: 16px; height: 16px; }
.cl { fill: none; stroke: #8c8c8c; stroke-width: .8; }
.player { width: 580px; padding-top: 118px; display: flex; align-items: center; }
.track { width: 414px; height: 6px; margin: 0 -1px 0 15px; border-radius: 3px; background: #08073f; }
.card { width: 338px; height: 130px; margin-top: 2px; padding: 17px 21px 0; border: 1px solid #c2c2c2; border-radius: 3px; background: linear-gradient(#fff 70%, #fafafa); }
.time { display: grid; grid-template-columns: 27px 1fr 22px; align-items: center; height: 22px; color: #191919; font-size: 15px; }
.time b { font-weight: 700; letter-spacing: -0.12px; position: relative; top: -1px; }
.usage { display: flex; gap: 7px; align-items: center; height: 20px; margin: 9px 0 10px 2px; font-size: 12px; font-weight: 500; color: #191919; }
.usage svg { margin-top: -1px; }
.usage span { letter-spacing: -0.05px; }
.save { display: flex; height: 34px; border-radius: 2px; overflow: hidden; color: #fff; font-size: 15px; font-weight: 500; line-height: 33px; text-align: center; letter-spacing: -0.12px; }
.save span { flex: 1; background: #2672e8; border-bottom: 2px solid #1b60ca; }
.save i { width: 25px; background: #1b60ca; border-bottom: 2px solid #4632cc; padding: 12px 0 0 6px; }

.desktop { position: relative; height: 49px; flex: none; background: linear-gradient(90deg, #1c2026, #171a18 50%, #201d20); padding: 2px 29px 0; }
.wall { position: absolute; left: 0; top: 0; }
.dock { position: relative; width: 1222px; height: 48px; padding: 0 2px; display: flex; border: 1px solid #59595b; border-bottom: 0; border-radius: 4px 4px 0 0; background: linear-gradient(90deg, #2a2b31, #4c403f 15%, #5c4c4b 27%, #494043 40%, #36353c 55%, #33333b 75%, #2e2f38); font-family: Inter, sans-serif; }
.app { flex: none; width: 38.100px; height: 47px; display: flex; flex-direction: column; align-items: center; padding-top: 5px; }
.app svg { width: 32px; height: 32px; overflow: visible; }
.app svg.big { width: 36px; height: 36px; margin: -2px 0; }
.app svg.trash { width: 28px; height: 36px; margin: -3px 0 -1px; }
.app svg[viewBox="0 0 36 32"] { width: 36px; }
.app.on::after { content: ""; width: 4px; height: 4px; margin-top: 3px; border-radius: 50%; background: #b9b8ba; }
.sep { width: 1px; height: 36px; margin: 5px 8.500px 0 9px; background: #77757a; flex: none; }
```

FILE: scene.js
```js
(function () {
  var BL = [420, 459], BR = [769, 437], FR = [889, 605], FL = [430, 646];
  var SIZE = 235;

  // Projective map from plate millimetres to screen pixels.
  var dx1 = BR[0] - FR[0], dx2 = FL[0] - FR[0], dx3 = BL[0] - BR[0] + FR[0] - FL[0];
  var dy1 = BR[1] - FR[1], dy2 = FL[1] - FR[1], dy3 = BL[1] - BR[1] + FR[1] - FL[1];
  var det = dx1 * dy2 - dx2 * dy1;
  var g = (dx3 * dy2 - dx2 * dy3) / det, h = (dx1 * dy3 - dx3 * dy1) / det;
  function p(x, y) {
    var u = x / SIZE, v = y / SIZE, w = g * u + h * v + 1;
    var X = (BR[0] - BL[0] + g * BR[0]) * u + (FL[0] - BL[0] + h * FL[0]) * v + BL[0];
    var Y = (BR[1] - BL[1] + g * BR[1]) * u + (FL[1] - BL[1] + h * FL[1]) * v + BL[1];
    return (X / w).toFixed(1) + ' ' + (Y / w).toFixed(1);
  }
  function quadPath(x0, y0, x1, y1) {
    return 'M' + p(x0, y0) + 'L' + p(x1, y0) + 'L' + p(x1, y1) + 'L' + p(x0, y1) + 'z';
  }
  // Border of the plate that lies outside the given inner rectangle.
  function frame(x0, y0, x1, y1, alpha) {
    return '<path fill-rule="evenodd" d="' + quadPath(0, 0, SIZE, SIZE) + quadPath(x0, y0, x1, y1) + '" fill="#000" fill-opacity="' + alpha + '"/>';
  }
  function ell(cy, rx, ry, attrs) {
    return '<ellipse cx="627.5" cy="' + cy + '" rx="' + rx + '" ry="' + ry + '" ' + attrs + '/>';
  }

  var plate = '<path d="' + quadPath(0, 0, SIZE, SIZE) + '" fill="url(#plateFill)"/>';
  plate += frame(21, 2, 213, 221, 0.07) + frame(11, 0, 224, SIZE, 0.06);
  var lines = '';
  for (var m = 7.5; m < SIZE; m += 10) {
    lines += 'M' + p(m, 0) + 'L' + p(m, SIZE) + 'M' + p(0, m) + 'L' + p(SIZE, m);
  }
  plate += '<path d="' + lines + '" stroke="#000" stroke-opacity=".15" stroke-width="1.1" fill="none"/>';

  var s = '<defs><linearGradient id="plateFill" x1="0" y1="0" x2="0" y2="1"><stop offset="0" stop-color="#dadada"/><stop offset="1" stop-color="#ececec"/></linearGradient>' +
    '<clipPath id="mouth">' + ell(491, 95, 37.5, '') + '</clipPath>' +
    '<clipPath id="floor">' + ell(527, 89.5, 39, '') + '</clipPath></defs>';

  s += '<path d="M430 646L889 605v4L430 650z" fill="#dadada"/>';
  s += '<g>' + plate + '</g>';
  s += '<g fill="none" stroke="#2f7df6" stroke-width="1" shape-rendering="crispEdges">' +
    '<path d="M420 459L769 437L889 605L430 646z"/><path d="M420 459L400 140M430 646L397 140M769 437L780 140M889 605L924 140"/></g>';
  s += '<path d="M418.5 431L420.500 459" stroke="#0000e8" stroke-width="3"/><path d="M420.500 459L421 472" stroke="#f00" stroke-width="3"/><path d="M421 459.500L451 457.500" stroke="#0f0" stroke-width="2"/>';

  s += ell(483, 125, 51, 'fill="#b4b4b4" fill-opacity=".75"') + ell(485.500, 125, 48, 'fill="#a0a0a0" fill-opacity=".75"');
  s += '<ellipse cx="627.5" cy="527" rx="109" ry="48" fill="none" stroke="#c4981c" stroke-width="1.3" shape-rendering="crispEdges"/>';
  s += '<ellipse cx="627.5" cy="527" rx="109" ry="48" fill="none" stroke="#4a3c12" stroke-width="1" stroke-dasharray="1.5 4" shape-rendering="crispEdges"/>';

  var N = 16, i, t;
  s += '<g shape-rendering="crispEdges">';
  for (i = 0; i <= N; i++) {
    t = i / N;
    s += ell(527 - 36 * t, 92 + 6.5 * t, 39 + 1.2 * t, 'fill="#5a480c" stroke="' + (i % 2 ? '#ffdf35' : '#f7cd2b') + '" stroke-width="1.5"');
  }
  s += '<g clip-path="url(#mouth)">';
  for (i = 0; i <= N; i++) {
    t = i / N;
    s += ell(491 + 36 * t, 96 - 5.500 * t, 38.5, 'fill="#5a480c" stroke="' + (i % 2 ? '#f9d42e' : '#eaba25') + '" stroke-width="1.5"');
  }
  s += '</g></g>';
  s += '<g clip-path="url(#mouth)"><g clip-path="url(#floor)">' + plate +
    '<path d="M530 480V540H725V480Q725 522 627 523Q530 522 530 480z" fill="#a9a9a9"/>' +
    '<path d="M598 495l8 22M614 496l9 22M633 495l9 18M684 503l8 13" stroke="#888" fill="none" stroke-dasharray="6 3"/>' +
    '<path d="M598 499l22-1M600 508l24-1M606 515l22-1M632 502l12-1M629 508l16-1" stroke="#8a8a8a" fill="none" stroke-dasharray="7 4"/></g></g>';
  s += ell(491, 97, 39, 'fill="none" stroke="#dca722" stroke-width="3.4"');
  s += ell(491, 97, 39, 'fill="none" stroke="#a67c18" stroke-width="1" stroke-dasharray="1.5 2.5"');
  s += '<path d="M530 494A97.500 39 0 0 0 725 494" fill="none" stroke="#edb920" stroke-width="2.5"/>';
  document.getElementById('scene').innerHTML = s;
})();
```
